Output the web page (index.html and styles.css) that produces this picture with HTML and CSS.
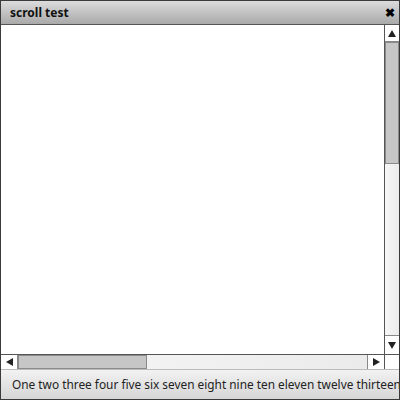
FILE: index.html
```html
<!DOCTYPE html>
<html>
<head>
<meta charset="utf-8">
<link rel="stylesheet" href="styles.css">
</head>
<body>
<div class="window">
  <div class="titlebar">
    <span class="title">scroll test</span>
    <span class="close">✖</span>
  </div>
  <div class="content">
    <div class="viewport"></div>
    <div class="vscroll">
      <div class="btn"><span class="tri up"></span></div>
      <div class="track v"><div class="thumb vthumb"></div></div>
      <div class="btn"><span class="tri down"></span></div>
    </div>
    <div class="hscroll">
      <div class="btn h"><span class="tri left"></span></div>
      <div class="track h"><div class="thumb hthumb"></div></div>
      <div class="btn h"><span class="tri right"></span></div>
    </div>
    <div class="corner"></div>
  </div>
  <div class="status">One two three four five six seven eight nine ten eleven twelve thirteen fourteen fifteen</div>
</div>
</body>
</html>
```
FILE: styles.css
```css
html, body { margin: 0; padding: 0; background: #fff; }
.window {
  width: 400px; height: 400px; box-sizing: border-box;
  border: 1px solid #3a3a3a;
  display: flex; flex-direction: column;
  font-family: "Noto Sans", "Open Sans", sans-serif;
  overflow: hidden;
}
.titlebar {
  height: 23px; flex: none;
  background: linear-gradient(#dcdcdc, #a9a9a9);
  border-bottom: 1px solid #555;
  display: flex; align-items: center; justify-content: space-between;
  padding: 0 4px 0 9px;
}
.title { font-weight: bold; font-size: 12px; color: #111; }
.close { font-size: 12px; font-weight: bold; color: #000; }
.content {
  flex: 1; display: grid;
  grid-template-columns: 1fr 15px;
  grid-template-rows: 1fr 15px;
  min-height: 0;
}
.viewport { background: #fff; }
.vscroll {
  display: flex; flex-direction: column;
  border-left: 1px solid #555;
  background: #f0f0f0;
}
.hscroll {
  display: flex; flex-direction: row;
  border-top: 1px solid #555;
  background: #f0f0f0;
}
.btn {
  flex: none; height: 16px; background: #fff;
  display: flex; align-items: center; justify-content: center;
  border-bottom: 1px solid #888;
}
.vscroll .btn:last-child { border-bottom: none; border-top: 1px solid #888; height: 18px; }
.btn.h { height: auto; width: 16px; border-bottom: none; border-right: 1px solid #888; }
.hscroll .btn.h:last-child { border-right: none; border-left: 1px solid #888; }
.track { flex: 1; display: flex; background: linear-gradient(90deg, #f7f7f7, #ebebeb); }
.track.v { flex-direction: column; }
.thumb { background: #c6c6c6; box-sizing: border-box; border: 1px solid #8a8a8a; }
.vthumb { height: 122px; }
.hthumb { width: 129px; }
.tri { width: 0; height: 0; border-style: solid; }
.tri.up { border-width: 0 4px 7px 4px; border-color: transparent transparent #222 transparent; }
.tri.down { border-width: 7px 4px 0 4px; border-color: #222 transparent transparent transparent; }
.tri.left { border-width: 4px 7px 4px 0; border-color: transparent #222 transparent transparent; }
.tri.right { border-width: 4px 0 4px 7px; border-color: transparent transparent transparent #222; }
.corner { background: #fff; border-left: 1px solid #555; border-top: 1px solid #555; }
.status {
  height: 29px; flex: none;
  border-top: 1px solid #bbb;
  background: linear-gradient(#f2f2f2, #d6d6d6);
  font-size: 11.85px; color: #222;
  white-space: nowrap; overflow: hidden;
  padding-left: 11px; line-height: 29px;
}
```
